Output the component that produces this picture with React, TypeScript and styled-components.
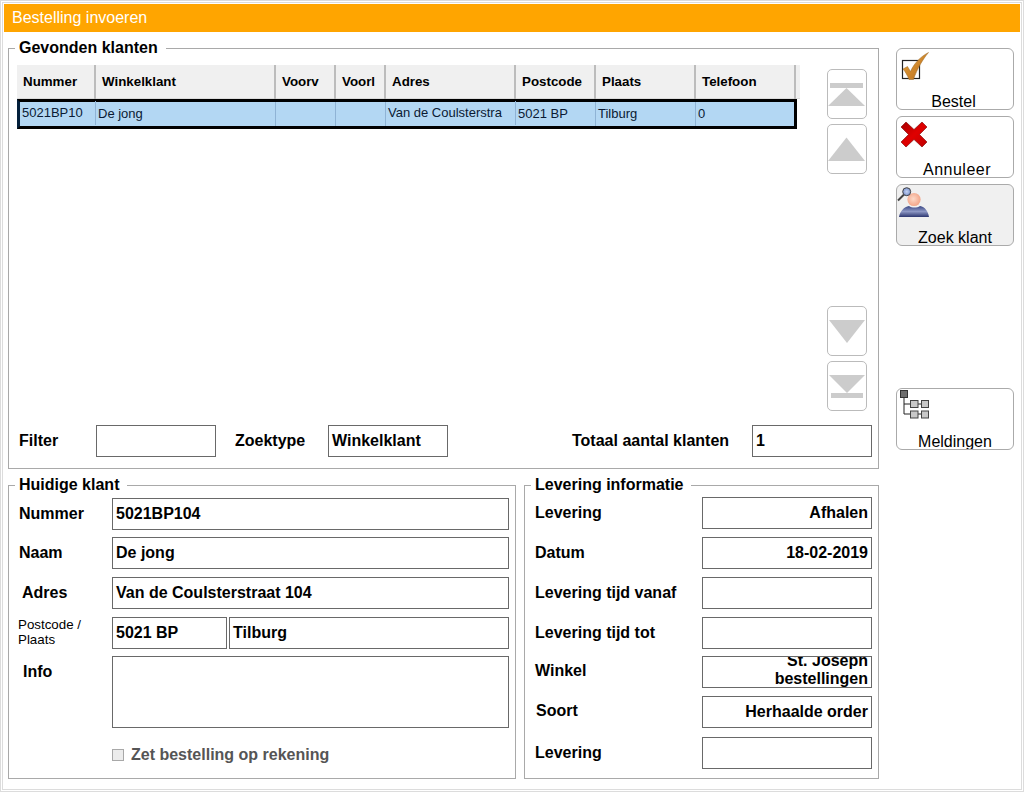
import React from "react";
import styled, { createGlobalStyle } from "styled-components";

const Global = createGlobalStyle`
  html, body { margin: 0; padding: 0; background: #fff; }
  body { font-family: "Liberation Sans", Arial, sans-serif; color: #000; }
`;

const Frame = styled.div`
  box-sizing: border-box;
  width: 1024px;
  height: 792px;
  padding: 1px;
  background: #fff;
  border: 1px solid #dcdcdc;
`;
const Window = styled.div`
  box-sizing: border-box;
  height: 100%;
  border: 1px solid #dcdcdc;
  padding: 1px 1px 0;
  display: flex;
  flex-direction: column;
`;
const TitleBar = styled.div`
  height: 28px;
  background: #ffa500;
  color: #fff;
  font-size: 16px;
  line-height: 28px;
  padding-left: 8px;
  flex: none;
`;
const Body = styled.div`
  display: flex;
  gap: 17px;
  padding: 8px 0 0 4px;
  flex: 1;
`;
const LeftColumn = styled.div`
  width: 871px;
  display: flex;
  flex-direction: column;
`;
const Group = styled.fieldset<{ $w: number; $h: number; $pl: number }>`
  box-sizing: border-box;
  margin: 0;
  width: ${(p) => p.$w}px;
  height: ${(p) => p.$h}px;
  border: 1px solid #a9a9a9;
  padding: 0 0 0 ${(p) => p.$pl}px;
  min-width: 0;
  display: block;
`;
const Legend = styled.legend<{ $ml: number }>`
  margin-left: ${(p) => p.$ml}px;
  padding: 0 8px 0 4px;
  font-size: 16px;
  line-height: 16px;
  font-weight: bold;
`;
const FoundBody = styled.div`
  display: flex;
  flex-direction: column;
  height: 411px;
  padding-top: 9px;
  box-sizing: border-box;
`;
const TableArea = styled.div`
  display: flex;
  flex: 1;
`;
const Table = styled.div`
  width: 780px;
  flex: none;
`;
const HeadRow = styled.div`
  display: grid;
  grid-template-columns: 79px 180px 60px 50px 130px 80px 100px 100px;
  height: 34px;
  width: 783px;
  background: #f0f0f0;
  border-bottom: 1px solid #dcdcdc;
  box-sizing: border-box;
`;
const HeadCell = styled.div`
  box-sizing: border-box;
  border-right: 2px solid #bcbcbc;
  padding-left: 6px;
  font-size: 13.33px;
  font-weight: bold;
  line-height: 34px;
  white-space: nowrap;
`;
const DataRow = styled.div`
  display: grid;
  grid-template-columns: 76px 180px 60px 50px 130px 80px 100px 98px;
  box-sizing: border-box;
  height: 30px;
  width: 780px;
  background: #b3d7f3;
  border: 3px solid #000;
  border-left-color: #03203c;
`;
const DataCell = styled.div<{ $up?: number }>`
  box-sizing: border-box;
  border-right: 1px solid #8fb3d5;
  padding-left: 2px;
  font-size: 13px;
  line-height: 24px;
  color: #0a1a33;
  position: relative;
  top: ${(p) => -(p.$up ?? 0)}px;
  overflow: hidden;
  white-space: nowrap;
  &:last-child { border-right: none; }
`;
const Pager = styled.div`
  margin-left: 30px;
  margin-top: 4px;
  display: flex;
  flex-direction: column;
  gap: 5px;
  height: 342px;
`;
const PagerGap = styled.div`
  flex: 1;
`;
const PagerButton = styled.div`
  box-sizing: border-box;
  width: 40px;
  height: 50px;
  border: 1px solid #bbb;
  border-radius: 5px;
  background: #fff;
  overflow: hidden;
  display: flex;
  align-items: center;
  justify-content: center;
`;
const FilterRow = styled.div`
  display: flex;
  align-items: flex-start;
  height: 42px;
  flex: none;
`;
const FieldLabel = styled.div<{ $w: number; $pl?: number; $up?: number }>`
  width: ${(p) => p.$w}px;
  padding-left: ${(p) => p.$pl ?? 0}px;
  box-sizing: border-box;
  flex: none;
  font-size: 16px;
  font-weight: bold;
  line-height: 32px;
  margin-top: ${(p) => -(p.$up ?? 0)}px;
`;
const SmallLabel = styled.div`
  width: 94px;
  flex: none;
  font-size: 13.33px;
  line-height: 15px;
`;
const Field = styled.div<{ $w: number; $h?: number; $right?: boolean; $tight?: boolean }>`
  box-sizing: border-box;
  width: ${(p) => p.$w}px;
  height: ${(p) => p.$h ?? 32}px;
  flex: none;
  border: 1px solid #696969;
  background: #fff;
  padding: 0 3px;
  font-size: 16px;
  font-weight: bold;
  line-height: ${(p) => (p.$tight ? "18px" : "30px")};
  text-align: ${(p) => (p.$right ? "right" : "left")};
  overflow: hidden;
  white-space: ${(p) => (p.$tight ? "normal" : "nowrap")};
`;
const TightText = styled.div`
  margin-top: -5px;
`;
const BottomRow = styled.div`
  display: flex;
  gap: 8px;
  margin-top: 8px;
`;
const FormRows = styled.div<{ $pt: number }>`
  display: flex;
  flex-direction: column;
  padding-top: ${(p) => p.$pt}px;
`;
const FormRow = styled.div<{ $mb: number }>`
  display: flex;
  gap: 2px;
  margin-bottom: ${(p) => p.$mb}px;
`;
const LabelSlot = styled.div`
  width: 94px;
  flex: none;
  margin-right: -2px;
`;
const CheckRow = styled.label`
  display: flex;
  align-items: center;
  gap: 7px;
  margin: 19px 0 0 94px;
  height: 16px;
  color: #555;
  font-size: 16px;
  font-weight: bold;
`;
const Check = styled.input`
  appearance: none;
  box-sizing: border-box;
  margin: 0;
  width: 12px;
  height: 12px;
  border: 1px solid #a8a8a8;
  background: #ececec;
`;
const RightColumn = styled.div`
  width: 118px;
  display: flex;
  flex-direction: column;
  gap: 6px;
  padding-top: 8px;
`;
const ActionButton = styled.div<{ $active?: boolean; $mt?: number }>`
  box-sizing: border-box;
  width: 118px;
  height: 62px;
  border: 1px solid #aaa;
  border-radius: 6px;
  background: ${(p) => (p.$active ? "#f0f0f0" : "#fff")};
  display: flex;
  flex-direction: column;
  align-items: center;
  margin-top: ${(p) => p.$mt ?? 0}px;
  overflow: hidden;
`;
const ActionIcon = styled.svg`
  width: 32px;
  height: 32px;
  align-self: flex-start;
  margin-left: 2px;
  overflow: visible;
  flex: none;
`;
const ActionLabel = styled.div<{ $shift?: number; $spacing?: number }>`
  font-size: 16px;
  line-height: 18px;
  margin-top: 12px;
  white-space: nowrap;
  letter-spacing: ${(p) => p.$spacing ?? 0}px;
  transform: translateX(${(p) => p.$shift ?? 0}px);
`;

const columns = ["Nummer", "Winkelklant", "Voorv", "Voorl", "Adres", "Postcode", "Plaats", "Telefoon"];

const TopIcon = () => (
  <svg width="38" height="48" viewBox="0 0 38 48">
    <rect x="2" y="13" width="33" height="5" fill="#cccccc" />
    <polygon points="18.5,18 0,36 37,36" fill="#cccccc" />
  </svg>
);
const UpIcon = () => (
  <svg width="38" height="48" viewBox="0 0 38 48">
    <polygon points="18.5,12.5 0,36 37,36" fill="#cccccc" />
  </svg>
);
const DownIcon = () => (
  <svg width="38" height="48" viewBox="0 0 38 48">
    <polygon points="1,13 37,13 19,36" fill="#cccccc" />
  </svg>
);
const BottomIcon = () => (
  <svg width="38" height="48" viewBox="0 0 38 48">
    <polygon points="1,13 37,13 19,31" fill="#cccccc" />
    <rect x="3" y="31" width="32" height="5" fill="#cccccc" />
  </svg>
);

const CheckIcon = () => (
  <ActionIcon viewBox="0 0 32 32">
    <defs>
      <linearGradient id="tick" x1="0" y1="0" x2="1" y2="1">
        <stop offset="0" stopColor="#eaa63e" />
        <stop offset="1" stopColor="#b5691a" />
      </linearGradient>
    </defs>
    <rect x="3.5" y="11.5" width="17" height="18" fill="#fff" stroke="#222" strokeWidth="1.2" />
    <path d="M4 20 L8.5 17.5 L11.5 22.5 C15 14.5 21 8 29.5 3.5 C24 10 18 20 14.5 30.5 L10 30.5 C8.5 26.5 6.5 23 4 20 Z" fill="url(#tick)" stroke="#9a6a2a" strokeWidth="0.5" />
  </ActionIcon>
);
const CrossIcon = () => (
  <ActionIcon viewBox="0 0 32 32">
    <defs>
      <linearGradient id="cross" x1="0" y1="0" x2="1" y2="1">
        <stop offset="0" stopColor="#a80000" />
        <stop offset="0.5" stopColor="#e00000" />
        <stop offset="1" stopColor="#c00000" />
      </linearGradient>
    </defs>
    <polygon
      points="7,5 15,12.5 23,5 28,10 20.5,17.5 28,25 23,30 15,22.5 7,30 2,25 9.5,17.5 2,10"
      fill="url(#cross)"
      stroke="#7a0000"
      strokeWidth="0.6"
    />
  </ActionIcon>
);
const SearchIcon = () => (
  <ActionIcon viewBox="0 0 32 32">
    <defs>
      <radialGradient id="head" cx="0.45" cy="0.45" r="0.6">
        <stop offset="0" stopColor="#fdd9c8" />
        <stop offset="1" stopColor="#f2a184" />
      </radialGradient>
      <linearGradient id="torso" x1="0" y1="0" x2="0" y2="1">
        <stop offset="0" stopColor="#3a4785" />
        <stop offset="0.5" stopColor="#8d97c4" />
        <stop offset="1" stopColor="#2c3670" />
      </linearGradient>
      <radialGradient id="lens" cx="0.5" cy="0.5" r="0.6">
        <stop offset="0" stopColor="#c4d3f2" />
        <stop offset="1" stopColor="#6c86c8" />
      </radialGradient>
    </defs>
    <path d="M0 32 C1 26 5 22 10 21 C13 23 18 23 21 21 C26 22 29 26 30 32 Z" fill="url(#torso)" />
    <circle cx="15" cy="14.5" r="6.6" fill="url(#head)" />
    <line x1="5" y1="9.5" x2="-1" y2="15.5" stroke="#444" strokeWidth="2" />
    <circle cx="7.7" cy="6.7" r="4" fill="url(#lens)" stroke="#444" strokeWidth="1" />
  </ActionIcon>
);
const TreeIcon = () => (
  <ActionIcon viewBox="0 0 32 32">
    <path d="M5 8 V25 H11 M5 15 H11 M19 15 H22 M19 25 H22" fill="none" stroke="#222" strokeWidth="1" />
    <rect x="1.5" y="1.5" width="7" height="7" fill="#6e6e6e" stroke="#333" />
    <rect x="11.5" y="11.5" width="7.5" height="7" fill="#c8c8c8" stroke="#444" />
    <rect x="22.5" y="11.5" width="7" height="7" fill="#c8c8c8" stroke="#444" />
    <rect x="11.5" y="22" width="7.5" height="7" fill="#c8c8c8" stroke="#444" />
    <rect x="22.5" y="22" width="7" height="7" fill="#c8c8c8" stroke="#444" />
  </ActionIcon>
);

export default function App() {
  return (
    <>
      <Global />
      <Frame>
        <Window>
          <TitleBar>Bestelling invoeren</TitleBar>
          <Body>
            <LeftColumn>
              <Group $w={871} $h={429} $pl={8}>
                <Legend $ml={-2}>Gevonden klanten</Legend>
                <FoundBody>
                  <TableArea>
                    <Table>
                      <HeadRow>
                        {columns.map((c) => (
                          <HeadCell key={c}>{c}</HeadCell>
                        ))}
                      </HeadRow>
                      <DataRow>
                        <DataCell $up={1}>5021BP10</DataCell>
                        <DataCell>De jong</DataCell>
                        <DataCell />
                        <DataCell />
                        <DataCell $up={1}>Van de Coulsterstra</DataCell>
                        <DataCell>5021 BP</DataCell>
                        <DataCell>Tilburg</DataCell>
                        <DataCell>0</DataCell>
                      </DataRow>
                    </Table>
                    <Pager>
                      <PagerButton><TopIcon /></PagerButton>
                      <PagerButton><UpIcon /></PagerButton>
                      <PagerGap />
                      <PagerButton><DownIcon /></PagerButton>
                      <PagerButton><BottomIcon /></PagerButton>
                    </Pager>
                  </TableArea>
                  <FilterRow>
                    <FieldLabel $w={79} $pl={2}>Filter</FieldLabel>
                    <Field $w={120} />
                    <FieldLabel $w={112} $pl={19}>Zoektype</FieldLabel>
                    <Field $w={120}>Winkelklant</Field>
                    <FieldLabel $w={304} $pl={124}>Totaal aantal klanten</FieldLabel>
                    <Field $w={120}>1</Field>
                  </FilterRow>
                </FoundBody>
              </Group>
              <BottomRow>
                <Group $w={508} $h={302} $pl={9}>
                  <Legend $ml={-3}>Huidige klant</Legend>
                  <FormRows $pt={5}>
                    <FormRow $mb={7}>
                      <LabelSlot><FieldLabel $w={93} $pl={1}>Nummer</FieldLabel></LabelSlot>
                      <Field $w={397}>5021BP104</Field>
                    </FormRow>
                    <FormRow $mb={8}>
                      <LabelSlot><FieldLabel $w={93} $pl={1}>Naam</FieldLabel></LabelSlot>
                      <Field $w={397}>De jong</Field>
                    </FormRow>
                    <FormRow $mb={8}>
                      <LabelSlot><FieldLabel $w={93} $pl={4}>Adres</FieldLabel></LabelSlot>
                      <Field $w={397}>Van de Coulsterstraat 104</Field>
                    </FormRow>
                    <FormRow $mb={7}>
                      <LabelSlot><SmallLabel>Postcode /<br />Plaats</SmallLabel></LabelSlot>
                      <Field $w={115}>5021 BP</Field>
                      <Field $w={280}>Tilburg</Field>
                    </FormRow>
                    <FormRow $mb={0}>
                      <LabelSlot><FieldLabel $w={93} $pl={5}>Info</FieldLabel></LabelSlot>
                      <Field $w={397} $h={72} />
                    </FormRow>
                    <CheckRow>
                      <Check type="checkbox" disabled />
                      Zet bestelling op rekening
                    </CheckRow>
                  </FormRows>
                </Group>
                <Group $w={355} $h={302} $pl={10}>
                  <Legend $ml={-4}>Levering informatie</Legend>
                  <FormRows $pt={4}>
                    <FormRow $mb={8}>
                      <FieldLabel $w={165}>Levering</FieldLabel>
                      <Field $w={170} $right>Afhalen</Field>
                    </FormRow>
                    <FormRow $mb={8}>
                      <FieldLabel $w={165}>Datum</FieldLabel>
                      <Field $w={170} $right>18-02-2019</Field>
                    </FormRow>
                    <FormRow $mb={8}>
                      <FieldLabel $w={165}>Levering tijd vanaf</FieldLabel>
                      <Field $w={170} />
                    </FormRow>
                    <FormRow $mb={7}>
                      <FieldLabel $w={165}>Levering tijd tot</FieldLabel>
                      <Field $w={170} />
                    </FormRow>
                    <FormRow $mb={8}>
                      <FieldLabel $w={165} $up={1}>Winkel</FieldLabel>
                      <Field $w={170} $right $tight><TightText>St. Joseph bestellingen</TightText></Field>
                    </FormRow>
                    <FormRow $mb={9}>
                      <FieldLabel $w={165} $pl={1} $up={1}>Soort</FieldLabel>
                      <Field $w={170} $right>Herhaalde order</Field>
                    </FormRow>
                    <FormRow $mb={0}>
                      <FieldLabel $w={165}>Levering</FieldLabel>
                      <Field $w={170} />
                    </FormRow>
                  </FormRows>
                </Group>
              </BottomRow>
            </LeftColumn>
            <RightColumn>
              <ActionButton><CheckIcon /><ActionLabel $shift={-1.5}>Bestel</ActionLabel></ActionButton>
              <ActionButton><CrossIcon /><ActionLabel $spacing={0.5} $shift={2}>Annuleer</ActionLabel></ActionButton>
              <ActionButton $active><SearchIcon /><ActionLabel>Zoek klant</ActionLabel></ActionButton>
              <ActionButton $mt={136}><TreeIcon /><ActionLabel>Meldingen</ActionLabel></ActionButton>
            </RightColumn>
          </Body>
        </Window>
      </Frame>
    </>
  );
}
